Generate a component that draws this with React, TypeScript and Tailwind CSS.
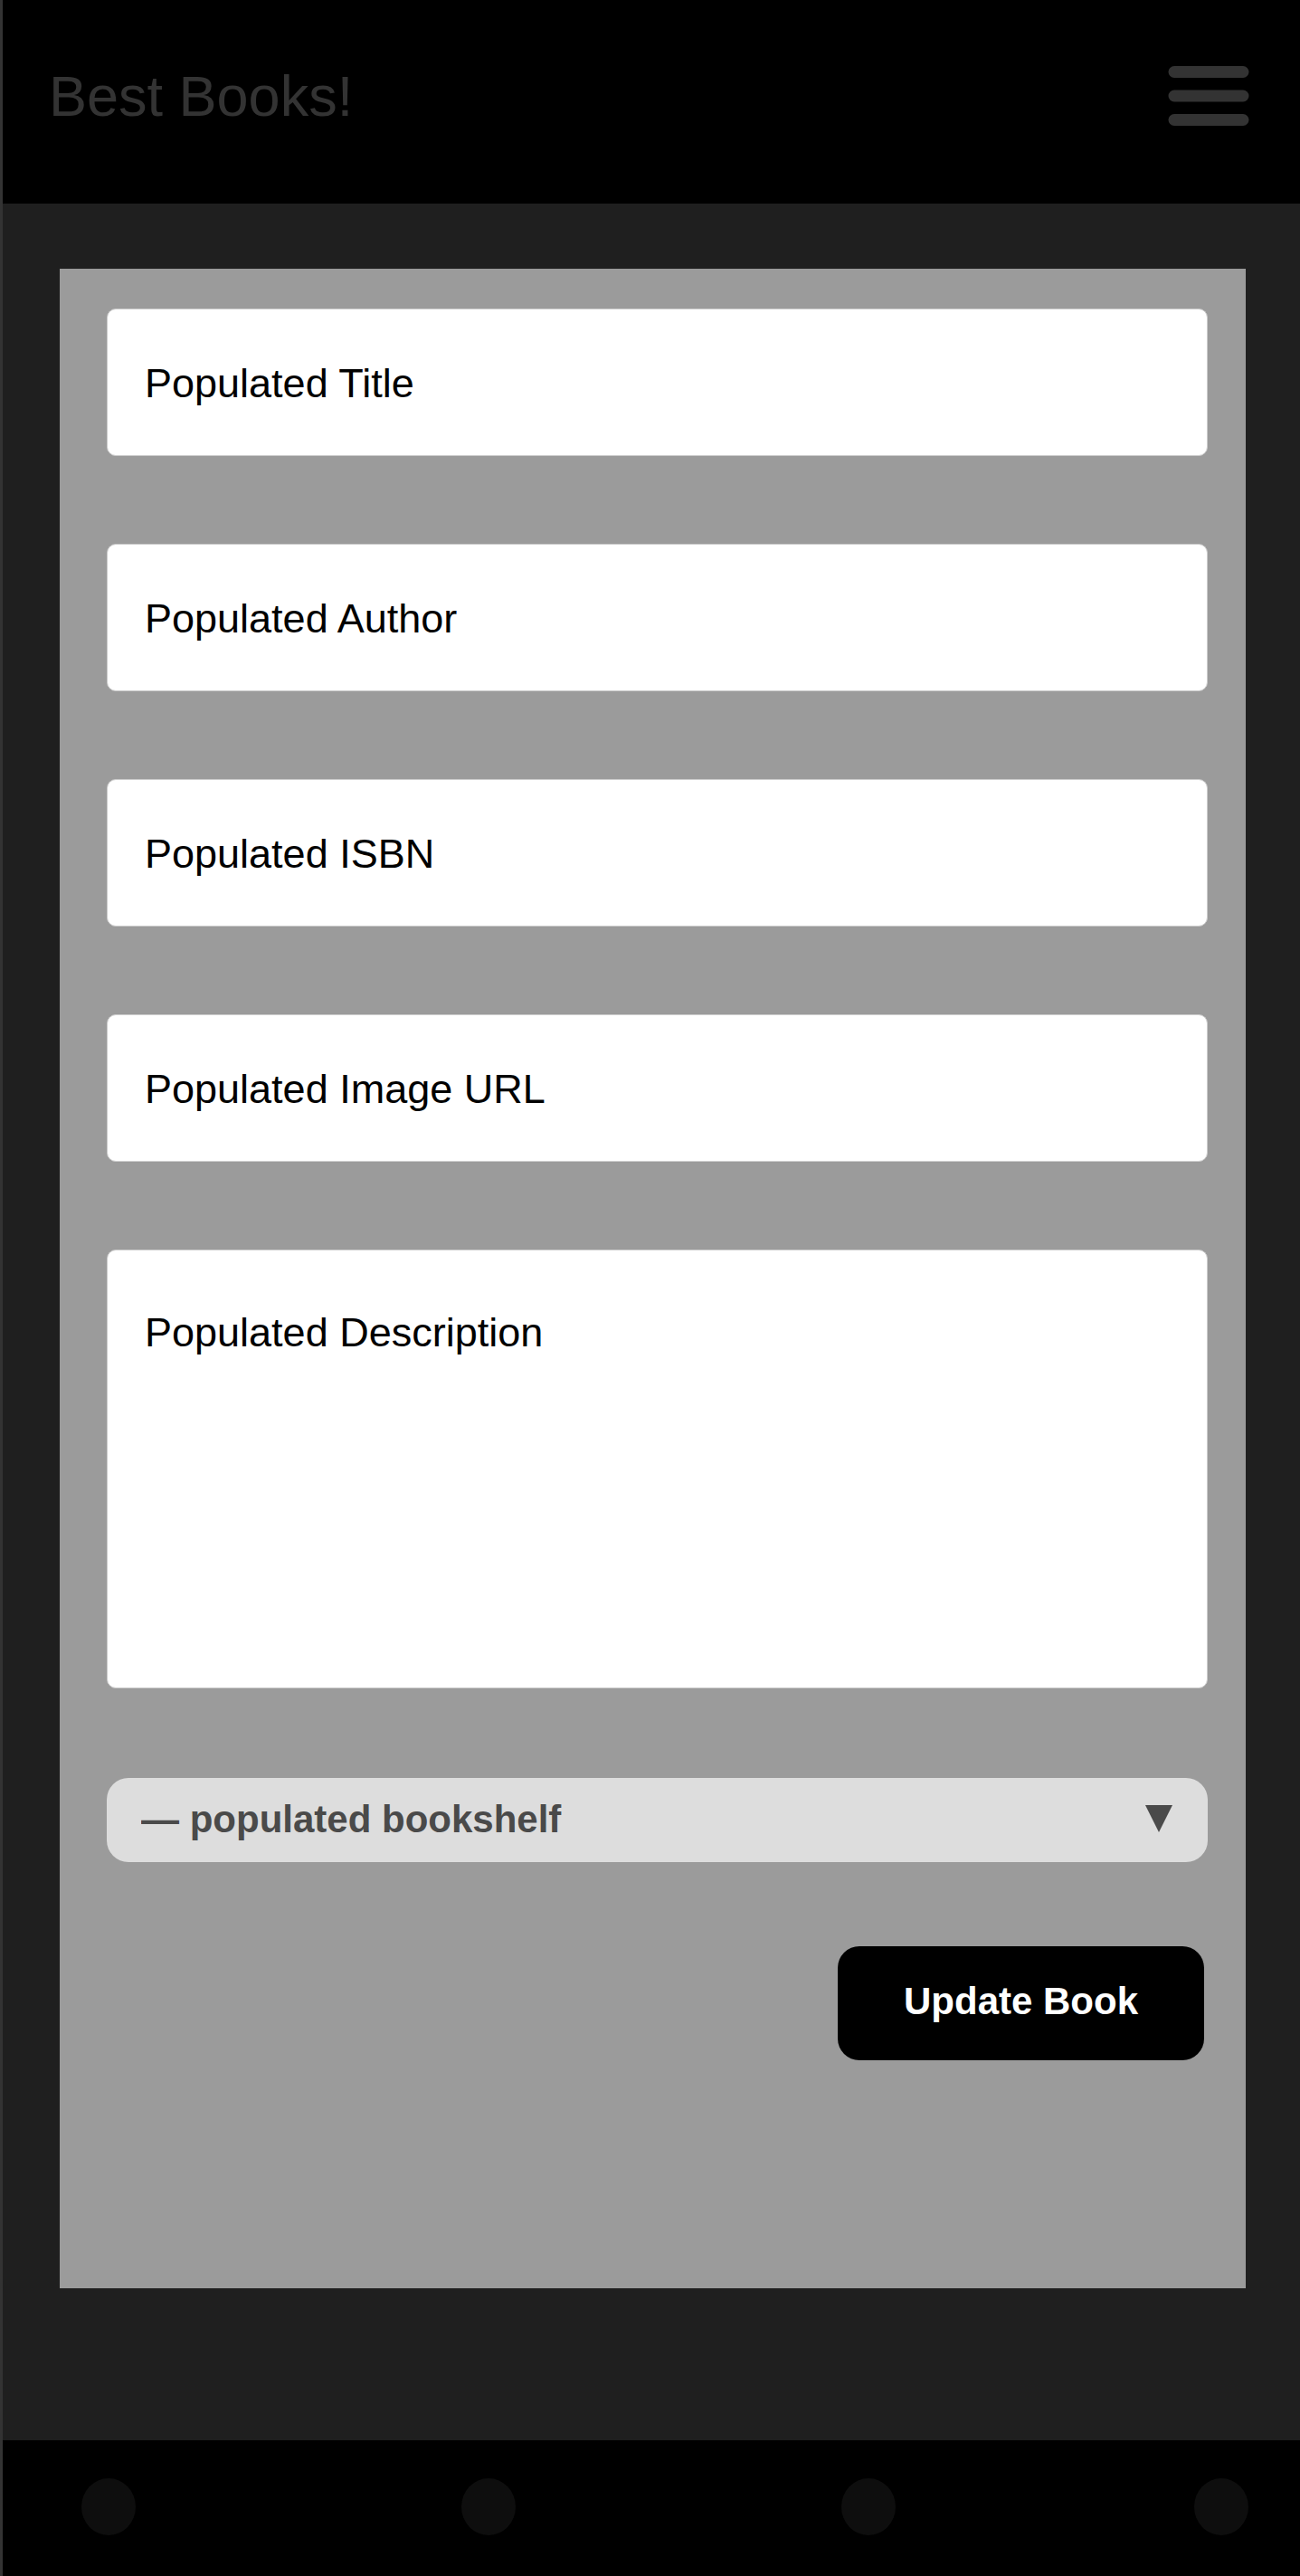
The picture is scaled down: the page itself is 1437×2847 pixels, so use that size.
import { useState } from 'react';

const fields = [
  { id: 'title', label: 'Title', value: 'Populated Title' },
  { id: 'author', label: 'Author', value: 'Populated Author' },
  { id: 'isbn', label: 'ISBN', value: 'Populated ISBN' },
  { id: 'image-url', label: 'Image URL', value: 'Populated Image URL' },
];

function Header() {
  return (
    <header className="flex h-[225px] items-center justify-between bg-black pr-14 pb-3.5 pl-[51px]">
      <h1 className="text-[63px] leading-[72px] text-[#333333]">Best Books!</h1>
      <button type="button" aria-label="Open menu">
        <svg className="block" width="90" height="66" viewBox="0 0 90 66" fill="#333333" aria-hidden="true">
          <rect x="0.5" y="0" width="89" height="13" rx="6.5" />
          <rect x="0.5" y="26.5" width="89" height="13" rx="6.5" />
          <rect x="0.5" y="53" width="89" height="13" rx="6.5" />
        </svg>
      </button>
    </header>
  );
}

function TextField({ id, label, value }: { id: string; label: string; value: string }) {
  return (
    <input
      id={id}
      name={id}
      type="text"
      aria-label={label}
      defaultValue={value}
      className="block h-[163px] w-full rounded-[10px] border border-[#cccccc] bg-white px-[41px] pt-0.5 text-[45px] leading-[52px] text-black"
    />
  );
}

function BookForm() {
  const [shelf, setShelf] = useState('populated');
  return (
    <form
      className="bg-[#9b9b9b] pt-11 pr-[42px] pb-[252px] pl-[52px]"
      onSubmit={(event) => event.preventDefault()}
    >
      <div className="flex flex-col gap-[97px]">
        {fields.map((field) => (
          <TextField key={field.id} {...field} />
        ))}
        <textarea
          id="description"
          name="description"
          aria-label="Description"
          defaultValue="Populated Description"
          className="block h-[485px] w-full resize-none rounded-[10px] border border-[#cccccc] bg-white px-[41px] pt-[65px] text-[45px] leading-[52px] text-black"
        />
      </div>
      <div className="relative mt-[99px]">
        <select
          id="bookshelf"
          name="bookshelf"
          aria-label="Bookshelf"
          value={shelf}
          onChange={(event) => setShelf(event.target.value)}
          className="block h-[93px] w-full appearance-none rounded-3xl bg-[#dddddd] pr-24 pb-0.5 pl-[38px] text-[42px] leading-[48px] font-bold text-[#4a4a4a]"
        >
          <option value="populated">— populated bookshelf</option>
        </select>
        <svg
          className="pointer-events-none absolute top-[30px] right-[39px]"
          width="30"
          height="30"
          viewBox="0 0 30 30"
          fill="#4a4a4a"
          aria-hidden="true"
        >
          <path d="M0 0H30L15 30Z" />
        </svg>
      </div>
      <div className="mt-[93px] flex justify-end pr-1">
        <button
          type="submit"
          className="h-[126px] w-[405px] rounded-3xl bg-black pb-1 text-[42px] leading-[48px] font-bold text-white"
        >
          Update Book
        </button>
      </div>
    </form>
  );
}

function Footer() {
  return (
    <footer className="grid h-[150px] grid-cols-[14fr_14fr_13fr_60px] bg-black pt-[42px] pr-[57px] pl-[87px]">
      {[0, 1, 2, 3].map((dot) => (
        <span key={dot} className="h-[63px] w-[60px] rounded-[50%] bg-[#0e0e0e]" />
      ))}
    </footer>
  );
}

export default function App() {
  return (
    <div className="flex min-h-screen flex-col border-l-[3px] border-[#333333] bg-[#1f1f1f] font-['Liberation_Sans',Arial,sans-serif]">
      <Header />
      <main className="flex-1 pt-[72px] pr-[60px] pb-[168px] pl-[63px]">
        <BookForm />
      </main>
      <Footer />
    </div>
  );
}
